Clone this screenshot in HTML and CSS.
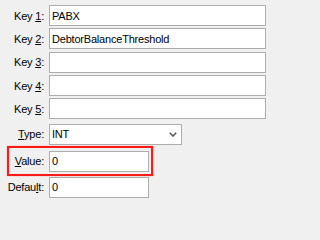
FILE: index.html
```html
<!DOCTYPE html>
<html>
<head>
<meta charset="utf-8">
<link rel="stylesheet" href="styles.css">
</head>
<body>
<div class="form">
  <div class="row"><span class="label">Key <u>1</u>:</span><div class="field wide">PABX</div></div>
  <div class="row"><span class="label">Key <u>2</u>:</span><div class="field wide">DebtorBalanceThreshold</div></div>
  <div class="row"><span class="label">Key <u>3</u>:</span><div class="field wide"></div></div>
  <div class="row"><span class="label">Key <u>4</u>:</span><div class="field wide"></div></div>
  <div class="row"><span class="label">Key <u>5</u>:</span><div class="field wide"></div></div>
  <div class="row type"><span class="label"><u>T</u>ype:</span><div class="field combo"><span>INT</span><svg class="chev" width="8" height="5" viewBox="0 0 8 5"><path d="M0.8 0.8 L4 4 L7.2 0.8" fill="none" stroke="#5a5a5a" stroke-width="1.6"/></svg></div></div>
  <div class="row highlight"><span class="label"><u>V</u>alue:</span><div class="field short">0</div></div>
  <div class="row last"><span class="label">Defau<u>l</u>t:</span><div class="field short">0</div></div>
</div>
</body>
</html>
```
FILE: styles.css
```css
html, body {
  margin: 0;
  padding: 0;
  background: #f0f0f0;
  width: 271px;
  height: 202px;
  overflow: hidden;
}
.form {
  display: flex;
  flex-direction: column;
  padding-top: 5px;
  font-family: "Liberation Sans", Arial, sans-serif;
  font-size: 11px;
  letter-spacing: -0.2px;
  color: #000;
}
.row {
  display: flex;
  align-items: center;
  height: 21px;
  margin-bottom: 2.35px;
}
.label {
  width: 49px;
  box-sizing: border-box;
  padding-right: 5px;
  text-align: right;
  white-space: nowrap;
}
.label u {
  text-underline-offset: 1px;
}
.field {
  box-sizing: border-box;
  height: 21px;
  border: 1px solid #adadad;
  background: #fff;
  padding: 0 2px;
  display: flex;
  align-items: center;
  white-space: nowrap;
  overflow: hidden;
}
.wide {
  width: 217px;
}
.combo {
  width: 133px;
  justify-content: space-between;
  padding-right: 4px;
}
.chev {
  display: block;
  margin-top: 1px;
}
.short {
  width: 100px;
}
.type {
  margin-top: 2px;
  margin-bottom: 1px;
}
.highlight {
  height: auto;
  margin-left: 7px;
  width: 146px;
  box-sizing: border-box;
  border: 2px solid #ff1a1a;
  box-shadow: 0 0 1px 0 rgba(255, 60, 60, 0.6);
  padding: 3px 0 2px 0;
  margin-bottom: 1px;
}
.highlight .label {
  width: 40px;
}
.last {
  margin-bottom: 0;
}
```
